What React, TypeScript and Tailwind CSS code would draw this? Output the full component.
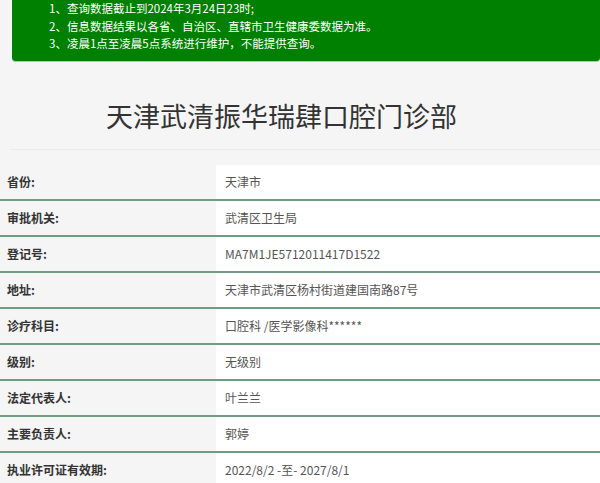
const notices = [
  "1、查询数据截止到2024年3月24日23时;",
  "2、信息数据结果以各省、自治区、直辖市卫生健康委数据为准。",
  "3、凌晨1点至凌晨5点系统进行维护，不能提供查询。",
];

const rows: [string, string][] = [
  ["省份:", "天津市"],
  ["审批机关:", "武清区卫生局"],
  ["登记号:", "MA7M1JE5712011417D1522"],
  ["地址:", "天津市武清区杨村街道建国南路87号"],
  ["诊疗科目:", "口腔科 /医学影像科******"],
  ["级别:", "无级别"],
  ["法定代表人:", "叶兰兰"],
  ["主要负责人:", "郭婷"],
  ["执业许可证有效期:", "2022/8/2 -至- 2027/8/1"],
];

export default function App() {
  return (
    <div
      className="w-[600px] h-[483px] overflow-hidden bg-[#f5f5f5]"
      style={{ fontFamily: '"Microsoft YaHei", "Noto Sans CJK SC", "Noto Sans", sans-serif' }}
    >
      {/* notice banner */}
      <div className="ml-[12px] bg-[#008000] rounded-b-[4px] border-b border-[#9fd39f] pl-[37px] pb-[8px] text-[11.5px] leading-[17.5px] text-white">
        {notices.map((n) => (
          <div key={n}>{n}</div>
        ))}
      </div>

      {/* title */}
      <div className="ml-[10px] mt-[34px] border-b border-[#ebebeb] pb-[13px]">
        <h1 className="pl-[96px] text-[27px] leading-[40px] text-[#333] font-normal">天津武清振华瑞肆口腔门诊部</h1>
      </div>

      {/* info table */}
      <div className="mt-[15px]">
        {rows.map(([label, value]) => (
          <div key={label} className="flex h-[36px] border-b-2 border-[#6f9c82]">
            <div className="w-[216px] flex items-center pl-[7px] text-[12px] font-bold text-[#333]">{label}</div>
            <div className="flex-1 bg-white flex items-center pl-[9px] text-[12px] text-[#555]">{value}</div>
          </div>
        ))}
      </div>
    </div>
  );
}
